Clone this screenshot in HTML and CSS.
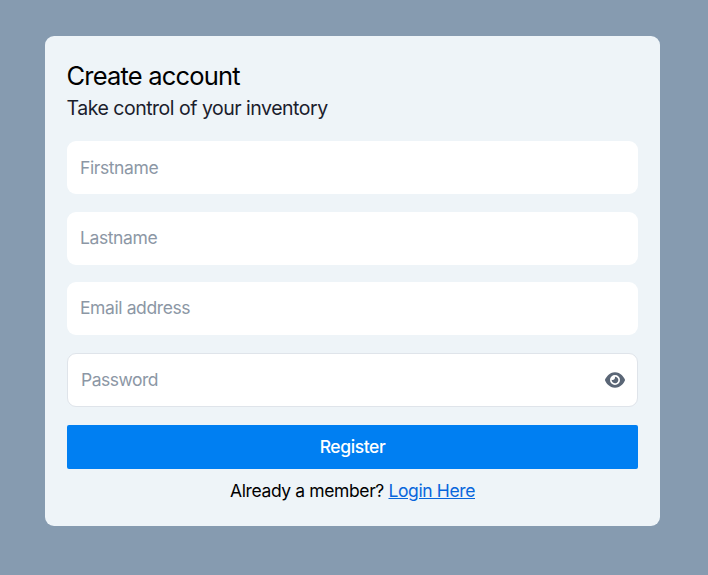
FILE: index.html
```html
<!DOCTYPE html>
<html lang="en">
<head>
<meta charset="utf-8">
<title>Create account</title>
<link rel="stylesheet" href="styles.css">
</head>
<body>
<main class="card">
  <h1 class="title">Create account</h1>
  <p class="subtitle">Take control of your inventory</p>
  <form class="form">
    <input class="field" type="text" placeholder="Firstname" aria-label="Firstname">
    <input class="field raised" type="text" placeholder="Lastname" aria-label="Lastname">
    <input class="field raised" type="email" placeholder="Email address" aria-label="Email address">
    <div class="password">
      <input class="password-input raised" type="password" placeholder="Password" aria-label="Password">
      <svg class="eye" viewBox="0 0 576 512" aria-hidden="true"><path fill="currentColor" d="M288 32c-80.800 0-145.500 36.800-192.600 80.600C48.600 156 17.300 208 2.500 243.700c-3.300 7.900-3.300 16.700 0 24.600C17.300 304 48.600 356 95.400 399.400C142.500 443.200 207.200 480 288 480s145.500-36.800 192.600-80.600c46.800-43.500 78.100-95.400 93-131.100c3.300-7.900 3.300-16.700 0-24.600c-14.900-35.700-46.200-87.700-93-131.100C433.500 68.800 368.800 32 288 32zM144 256a144 144 0 1 1 288 0 144 144 0 1 1 -288 0zm144-64c0 35.300-28.700 64-64 64c-7.100 0-13.900-1.200-20.300-3.300c-5.500-1.800-11.900 1.600-11.700 7.400c.3 6.900 1.300 13.800 3.200 20.700c13.700 51.200 66.400 81.600 117.600 67.900s81.600-66.400 67.900-117.600c-11.100-41.500-47.800-69.400-88.600-71.100c-5.800-.2-9.200 6.100-7.400 11.700c2.100 6.400 3.300 13.200 3.300 20.300z"/></svg>
    </div>
    <button class="register" type="button">Register</button>
  </form>
  <p class="member">Already a member? <a class="login" href="#">Login Here</a></p>
</main>
</body>
</html>
```
FILE: styles.css
```css
* { box-sizing: border-box; }

body {
  margin: 0;
  min-height: 575px;
  padding: 36px 48px 49px 45px;
  background: #869bb0;
  font-family: Inter, "Liberation Sans", sans-serif;
  color: #000;
}

.card {
  height: 490px;
  padding: 24px 22px 0;
  border-radius: 9px;
  background: #eef4f8;
}

.title {
  margin: 0 0 0 -0.5px;
  font-size: 25.5px;
  font-weight: 400;
  line-height: 32px;
  letter-spacing: -0.8px;
}

.subtitle {
  margin: 0 0 17px -0.5px;
  font-size: 19.5px;
  line-height: 32px;
  letter-spacing: -0.49px;
  color: #1a202c;
}

.form {
  display: flex;
  flex-direction: column;
}

.field,
.password {
  width: 100%;
  height: 53px;
  margin: 0 0 18px;
  border: 0;
  border-radius: 9px;
  background: #fff;
}

.field {
  padding: 0 13px;
}

.field:nth-child(2) { margin-bottom: 17px; }

.field,
.password-input {
  font: 400 17.5px Inter, "Liberation Sans", sans-serif;
  letter-spacing: -0.4px;
}

.field::placeholder,
.password-input::placeholder {
  color: #8c97a5;
  opacity: 1;
}

.raised { padding-bottom: 2px; }

.password {
  display: flex;
  align-items: center;
  height: 54px;
  padding: 0 12px 0 13px;
  border: 1px solid #dfe4ea;
}

.password-input {
  flex: 1;
  min-width: 0;
  padding: 0 0 2px;
  border: 0;
  background: transparent;
  letter-spacing: -0.5px;
}

.eye {
  width: 20px;
  height: 18px;
  color: #5a6676;
}

.register {
  height: 44px;
  padding: 0 0 2px;
  border: 0;
  border-radius: 2px;
  background: #007ff2;
  color: #fff;
  font: 500 17.5px Inter, "Liberation Sans", sans-serif;
  letter-spacing: -0.4px;
}

.member {
  margin: 9px 0 0;
  text-align: center;
  font-size: 17.5px;
  line-height: 26px;
  letter-spacing: -0.38px;
}

.login { color: #0866dc; }
```
